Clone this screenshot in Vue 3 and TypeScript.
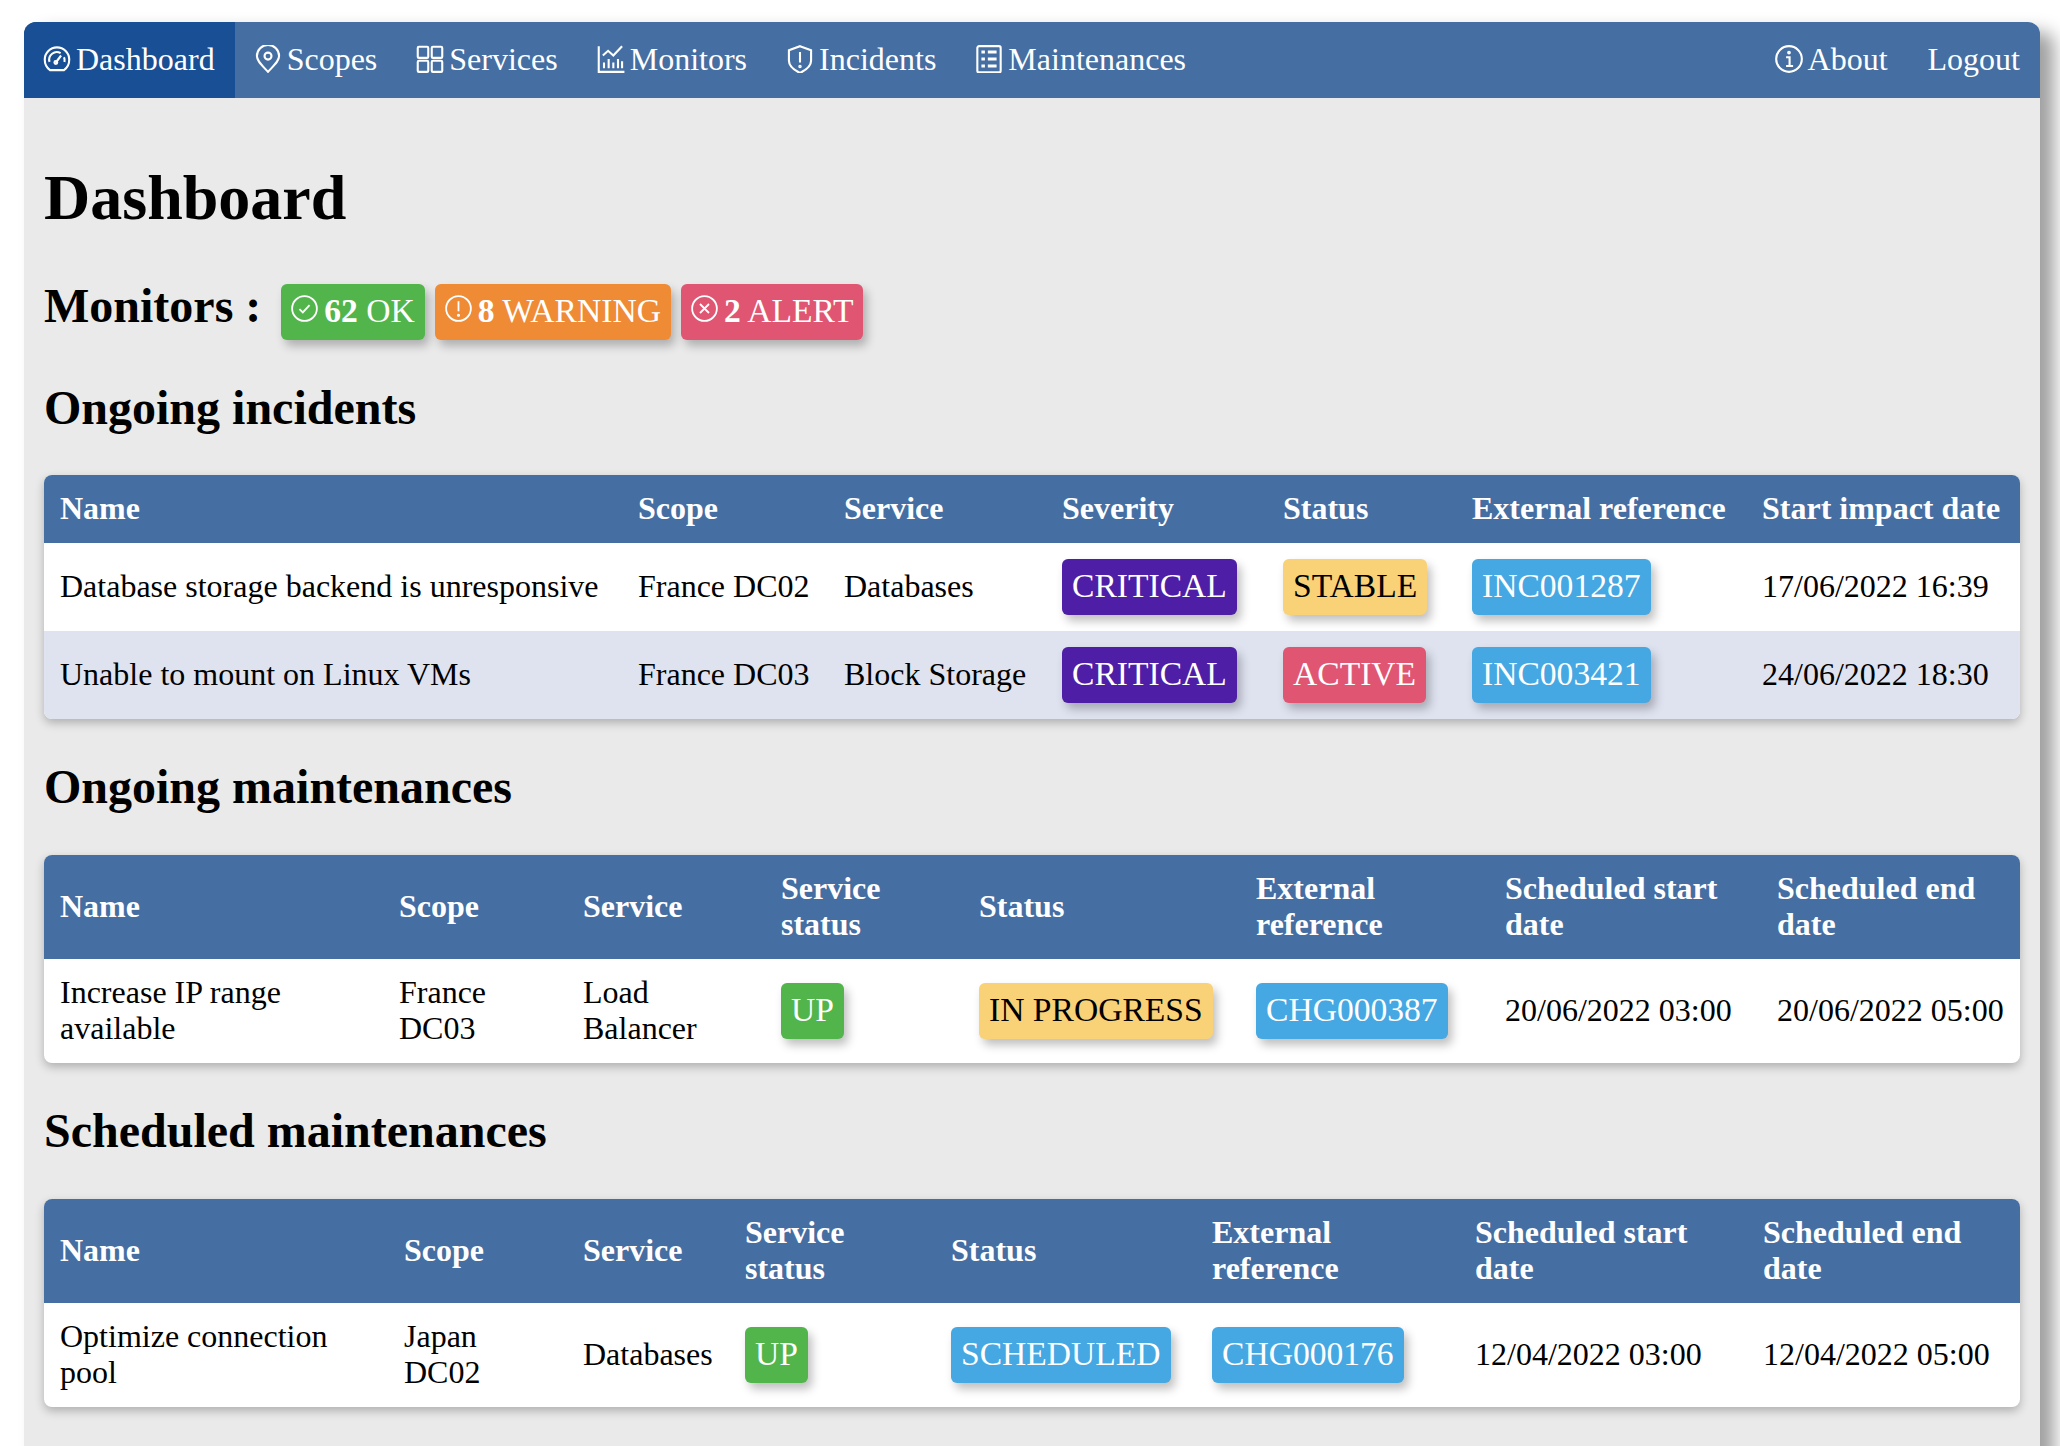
<script setup lang="ts">
type Cell = { text?: string; badge?: string; cls?: string }
interface Tbl { title: string; head: string[]; cols: number[]; rows: Cell[][] }
const incidents: Tbl = {
  title: 'Ongoing incidents',
  head: ['Name', 'Scope', 'Service', 'Severity', 'Status', 'External reference', 'Start impact date'],
  cols: [578, 206, 218, 221, 189, 290, 274],
  rows: [
    [{ text: 'Database storage backend is unresponsive' }, { text: 'France DC02' }, { text: 'Databases' }, { badge: 'CRITICAL', cls: 'purple' }, { badge: 'STABLE', cls: 'yellow' }, { badge: 'INC001287', cls: 'blue' }, { text: '17/06/2022 16:39' }],
    [{ text: 'Unable to mount on Linux VMs' }, { text: 'France DC03' }, { text: 'Block Storage' }, { badge: 'CRITICAL', cls: 'purple' }, { badge: 'ACTIVE', cls: 'red' }, { badge: 'INC003421', cls: 'blue' }, { text: '24/06/2022 18:30' }],
  ],
}
const mHead = ['Name', 'Scope', 'Service', 'Service status', 'Status', 'External reference', 'Scheduled start date', 'Scheduled end date']
const ongoing: Tbl = {
  title: 'Ongoing maintenances',
  head: mHead,
  cols: [339, 184, 198, 198, 277, 249, 272, 259],
  rows: [[{ text: 'Increase IP range available' }, { text: 'France DC03' }, { text: 'Load Balancer' }, { badge: 'UP', cls: 'green' }, { badge: 'IN PROGRESS', cls: 'yellow' }, { badge: 'CHG000387', cls: 'blue' }, { text: '20/06/2022 03:00' }, { text: '20/06/2022 05:00' }]],
}
const scheduled: Tbl = {
  title: 'Scheduled maintenances',
  head: mHead,
  cols: [344, 179, 162, 206, 261, 263, 288, 273],
  rows: [[{ text: 'Optimize connection pool' }, { text: 'Japan DC02' }, { text: 'Databases' }, { badge: 'UP', cls: 'green' }, { badge: 'SCHEDULED', cls: 'blue' }, { badge: 'CHG000176', cls: 'blue' }, { text: '12/04/2022 03:00' }, { text: '12/04/2022 05:00' }]],
}
const tables: Tbl[] = [incidents, ongoing, scheduled]
</script>

<template>
  <div class="page">
    <nav class="nav">
      <div class="nav-group">
        <a class="nav-item active">
          <svg class="ico" viewBox="0 0 24 24"><path d="M6 21.500C3 19.500 1.500 16 1.500 12.500a10.500 10.500 0 0 1 21 0c0 3.500-1.500 7-4.500 9z" /><path d="M5.600 14.500a6.500 6.500 0 0 1 9.500-7.500M18 10.500a6.500 6.500 0 0 1 .4 4" /><path d="M11 15l4.500-6" /><circle cx="11" cy="15" r="1.200" /></svg>Dashboard
        </a>
        <a class="nav-item">
          <svg class="ico" viewBox="0 0 24 24"><path d="M12 23C7 17.500 2.500 14 2.500 9.500a9.500 9.500 0 0 1 19 0C21.500 14 17 17.500 12 23z" /><circle cx="12" cy="9.500" r="3" /></svg>Scopes
        </a>
        <a class="nav-item">
          <svg class="ico" viewBox="0 0 24 24"><rect x="1.500" y="1.500" width="9" height="9.500" rx="1" /><rect x="13.500" y="1.500" width="9" height="9.500" rx="1" /><rect x="1.500" y="13.500" width="9" height="9.500" rx="1" /><rect x="13.500" y="13.500" width="9" height="9.500" rx="1" /></svg>Services
        </a>
        <a class="nav-item">
          <svg class="ico" viewBox="0 0 24 24"><path d="M1.500 1v22h22" /><path d="M5 9l4.500-4 4.500 4 7.500-8" /><path d="M6 20v-5M10 20v-8M14 20v-5M18 20v-8M21.500 20v-6" /></svg>Monitors
        </a>
        <a class="nav-item">
          <svg class="ico" viewBox="0 0 24 24"><path d="M12 1l9.500 3.500v9c0 4.500-4.500 8-9.500 10.500C7 21.500 2.500 18 2.500 13.500v-9z" /><path d="M12 6v9" /><circle cx="12" cy="18.500" r=".6" /></svg>Incidents
        </a>
        <a class="nav-item">
          <svg class="ico" viewBox="0 0 24 24"><rect x="2" y="1" width="20" height="22.500" rx="1.500" /><path class="thick" d="M5.500 6h3M11 6h7.500M5.500 12h3M11 12h7.500M5.500 18h3M11 18h7.500" /></svg>Maintenances
        </a>
      </div>
      <div class="nav-group">
        <a class="nav-item">
          <svg class="ico" viewBox="0 0 24 24"><circle cx="12" cy="12" r="11" /><path d="M9.500 10.500h3V18M9.500 18h6" /><circle cx="12" cy="6.500" r=".7" /></svg>About
        </a>
        <a class="nav-item">Logout</a>
      </div>
    </nav>

    <main class="main">
      <h1 class="title">Dashboard</h1>
      <div class="monitors">
        <h2 class="mon-title">Monitors :</h2>
        <span class="badge green mon">
          <svg class="ico small" viewBox="0 0 24 24"><circle cx="12" cy="12" r="11" /><path d="M7.500 12.500l3 3 6-6.500" /></svg><b>62</b> OK
        </span>
        <span class="badge orange mon">
          <svg class="ico small" viewBox="0 0 24 24"><circle cx="12" cy="12" r="11" /><path d="M12 5.500v9" /><circle cx="12" cy="18" r=".6" /></svg><b>8</b> WARNING
        </span>
        <span class="badge red mon">
          <svg class="ico small" viewBox="0 0 24 24"><circle cx="12" cy="12" r="11" /><path d="M8 8l8 8M16 8l-8 8" /></svg><b>2</b> ALERT
        </span>
      </div>

      <section v-for="t in tables" :key="t.title" class="block">
        <h2 class="sub">{{ t.title }}</h2>
        <table class="table">
          <colgroup>
            <col v-for="(w, k) in t.cols" :key="k" :style="{ width: w + 'px' }" />
          </colgroup>
          <thead>
            <tr><th v-for="h in t.head" :key="h">{{ h }}</th></tr>
          </thead>
          <tbody>
            <tr v-for="(r, i) in t.rows" :key="i">
              <td v-for="(c, j) in r" :key="j">
                <span v-if="c.badge" class="badge" :class="c.cls">{{ c.badge }}</span>
                <template v-else>{{ c.text }}</template>
              </td>
            </tr>
          </tbody>
        </table>
      </section>
    </main>
  </div>
</template>

<style>
html, body { margin: 0; background: #fff; }
</style>

<style scoped>
.page {
  width: 2016px;
  min-height: 1424px;
  margin: 22px 0 0 24px;
  background: #eaeaea;
  border-radius: 12px 12px 0 0;
  box-shadow: 14px 10px 18px rgba(0, 0, 0, .38);
  font-family: "Liberation Serif", serif;
  font-size: 32px;
  color: #000;
}
.nav {
  display: flex;
  justify-content: space-between;
  height: 76px;
  background: #456ea2;
  border-radius: 12px 12px 0 0;
  overflow: hidden;
  color: #fff;
}
.nav-group { display: flex; }
.nav-item {
  display: flex;
  align-items: center;
  gap: 4px;
  padding: 0 20px 2px;
  line-height: 74px;
}
.nav-item.active { background: #184f95; }
.ico {
  width: 28px;
  height: 28px;
  flex: none;
  fill: none;
  stroke: currentColor;
  stroke-width: 1.800;
  transform: translateX(-1px);
}
.ico .thick { stroke-width: 2.400; }
.ico.small { width: 27px; height: 27px; margin: 0 5px 0 1px; stroke-width: 1.600; }
.main { padding: 28px 20px 40px; }
.title { margin: 36px 0 44px; font-size: 64px; line-height: 72px; font-weight: 700; }
.monitors { display: flex; align-items: flex-start; gap: 10px; margin-bottom: 40px; }
.mon-title { margin: 0 10px 0 0; font-size: 48px; line-height: 56px; font-weight: 700; }
.mon { display: inline-flex; align-items: center; white-space: pre; margin-top: 6px; }
.sub { margin: 0 0 39px; font-size: 48px; line-height: 56px; font-weight: 700; }
.block + .block .sub { margin-bottom: 40px; }
.table {
  width: 100%;
  table-layout: fixed;
  margin-bottom: 40px;
  border-collapse: separate;
  border-spacing: 0;
  border-radius: 8px;
  overflow: hidden;
  background: #fff;
  box-shadow: 0 4px 10px rgba(0, 0, 0, .25);
}
th {
  padding: 15px 16px 17px;
  background: #456ea2;
  color: #fff;
  font-weight: 700;
  text-align: left;
  line-height: 36px;
}
td { padding: 15px 16px 17px; line-height: 36px; }
tbody td:has(.badge) { padding: 16px; }
tbody tr:nth-child(even) td { background: #dfe3f0; }
.badge {
  display: inline-block;
  padding: 9px 10px 11px;
  border-radius: 6px;
  font-size: 33.600px;
  line-height: 36px;
  color: #fff;
  white-space: nowrap;
  box-shadow: 4px 6px 10px rgba(0, 0, 0, .25);
}
.green { background: #52b54b; }
.orange { background: #ef8b35; }
.red { background: #e05672; }
.purple { background: #4e1ea6; }
.yellow { background: #f9d176; color: #000; }
.blue { background: #45a8e3; }
</style>
